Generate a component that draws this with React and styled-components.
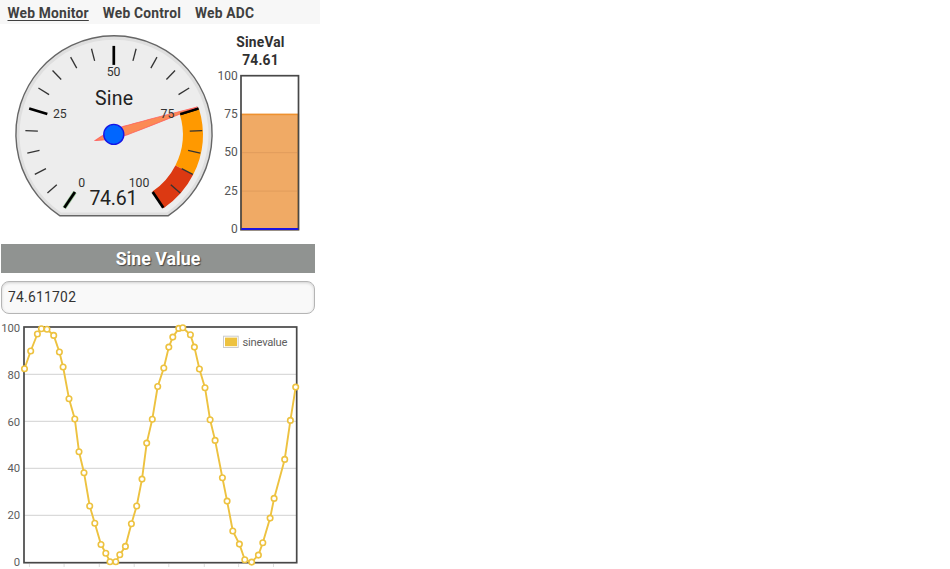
import React from "react";
import styled, { createGlobalStyle } from "styled-components";

const GlobalStyle = createGlobalStyle`
  html, body { margin: 0; background: #fff; overflow: hidden; }
  body { font-family: Roboto, "Open Sans", sans-serif; color: #333; }
`;

const Page = styled.main`
  display: flex;
  flex-direction: column;
  width: 320px;
  height: 569px;
  overflow: hidden;
`;

const Nav = styled.nav`
  display: flex;
  align-items: center;
  gap: 14px;
  box-sizing: border-box;
  height: 24px;
  padding: 1px 0 0 7.5px;
  background: #f7f7f7;
`;

const NavLink = styled.a`
  font-size: 13.8px;
  line-height: 16px;
  font-weight: 700;
  letter-spacing: 0.2px;
  color: #404040;
  white-space: nowrap;
  text-decoration: ${(p) => (p.$active ? "underline" : "none")};
  text-decoration-thickness: 1px;
  text-underline-offset: 1.5px;
  text-decoration-skip-ink: none;
`;

const Meters = styled.section`
  display: grid;
  grid-template-columns: 216px 104px;
  height: 220px;
`;

const Drawing = styled.svg`
  display: block;
  overflow: visible;
  font-family: Roboto, "Open Sans", sans-serif;
`;

const BarPanel = styled.div`
  display: flex;
  flex-direction: column;
`;

const BarTitle = styled.div`
  width: 89px;
  padding-top: 10px;
  height: 36px;
  text-align: center;
  font-size: 13.8px;
  line-height: 17.6px;
  font-weight: 700;
  letter-spacing: 0.2px;
  color: #303030;
`;

const Heading = styled.h1`
  display: flex;
  align-items: center;
  justify-content: center;
  width: 314px;
  height: 29px;
  margin: 0 0 0 1px;
  background: #909391;
  color: #fff;
  font-size: 17.8px;
  font-weight: 700;
  text-shadow: 1px 1px 1px #444;
`;

const ValueField = styled.div`
  display: flex;
  align-items: center;
  box-sizing: border-box;
  width: 314px;
  height: 33px;
  margin: 7.5px 0 4.5px 1px;
  padding: 0 6px;
  border: 1.5px solid #b5b5b5;
  border-radius: 8px;
  background: #f9f9f9;
  box-shadow: inset 0 1px 3px rgba(0, 0, 0, 0.16);
  font-size: 13.8px;
  letter-spacing: 0.28px;
  color: #333;
`;

const CX = 113.8;
const CY = 134.4;

const polar = (value, r) => {
  const a = ((-146 + value * 2.92) * Math.PI) / 180;
  return [CX + r * Math.sin(a), CY - r * Math.cos(a)];
};

const band = (from, to, r1, r2) => {
  const [a, b, c, d] = [polar(from, r2), polar(to, r2), polar(to, r1), polar(from, r1)];
  return `M${a} A${r2} ${r2} 0 0 1 ${b} L${c} A${r1} ${r1} 0 0 0 ${d} Z`;
};

const ticks = Array.from({ length: 21 }, (_, i) => i * 5);

function Gauge({ value }) {
  return (
    <Drawing width="216" height="220" viewBox="0 24 216 220">
      <path d="M60 215.8 A98.1 98.1 0 1 1 168 215.8 Z" fill="#dfdfdf" stroke="#666" strokeWidth="1.4" />
      <path d="M61 212.4 A94.5 94.5 0 1 1 167 212.4 Z" fill="#ededed" />
      <path d={band(75, 90, 69, 89)} fill="#ff9900" />
      <path d={band(90, 100, 69, 89)} fill="#dc3912" />
      {ticks.map((t) => {
        const major = t % 25 === 0;
        const [x1, y1] = polar(t, major ? 69.5 : 76);
        const [x2, y2] = polar(t, 88.5);
        return (
          <g key={t}>
            {t === 0 && <line x1={x1} y1={y1} x2={x2} y2={y2} stroke="#9acb9a" strokeWidth="4" />}
            <line x1={x1} y1={y1} x2={x2} y2={y2} stroke={major ? "#000" : "#333"} strokeWidth={major ? 2.7 : 1.3} />
          </g>
        );
      })}
      <g transform={`translate(${CX} ${CY}) rotate(${-146 + value * 2.92})`}>
        <path
          d="M0 -88 C1.2 -70 3.6 -38 4.6 -12 Q4 8 0 19.5 Q-4 8 -4.6 -12 C-3.6 -38 -1.2 -70 0 -88Z"
          fill="#ff6b25"
          fillOpacity="0.76"
          stroke="#ff5c5c"
          strokeOpacity="0.85"
        />
      </g>
      <g fill="#333" fontSize="12.3" textAnchor="middle">
        <text x="81.8" y="186.9">0</text>
        <text x="59.8" y="117.9">25</text>
        <text x="113.6" y="76.2">50</text>
        <text x="167.5" y="117.9">75</text>
        <text x="139" y="186.9">100</text>
      </g>
      <g fill="#222" fontSize="19.5" textAnchor="middle">
        <text x="114" y="104.5" textLength="38">Sine</text>
        <text x="113.4" y="205" textLength="48">{value}</text>
      </g>
      <line x1={polar(75, 69.5)[0]} y1={polar(75, 69.5)[1]} x2={polar(75, 88.5)[0]} y2={polar(75, 88.5)[1]} stroke="#000" strokeWidth="2.3" />
      <circle cx={CX} cy={CY} r="10" fill="#0066ff" stroke="#1414e6" strokeWidth="1.4" />
    </Drawing>
  );
}

function BarMeter() {
  return (
    <BarPanel>
      <BarTitle>SineVal<br />74.61</BarTitle>
      <Drawing width="104" height="174" viewBox="216 70 104 174">
        <rect x="241.3" y="114.4" width="57" height="115" fill="#f0aa65" stroke="#ee912f" strokeWidth="1.6" />
        <path d="M242 152.7H298M242 191.1H298" stroke="#e19c5c" />
        <rect x="241" y="75.7" width="57.5" height="154" fill="none" stroke="#484848" strokeWidth="1.7" />
        <path d="M241.3 228.9H298.2" stroke="#1a14e0" strokeWidth="2" />
        <g fill="#555" fontSize="12" textAnchor="end">
          {[100, 75, 50, 25, 0].map((n, i) => (
            <text key={n} x="237.8" y={79.8 + i * 38.25}>{n}</text>
          ))}
        </g>
      </Drawing>
    </BarPanel>
  );
}

const points = [
  [24.5, 368.7], [30.7, 351], [37.4, 334], [41.4, 328.7], [47, 329.3], [53.7, 335.4],
  [59.4, 352], [63.1, 367], [69, 398.7], [74.8, 419], [79, 451.7], [84, 472.7],
  [89.7, 506], [94.8, 523.3], [101, 544.5], [105.8, 553.3], [110, 561.7], [115.8, 561.7],
  [119.8, 554.7], [125.4, 546.4], [131.4, 523.8], [136.7, 506], [142, 479.1], [146.7, 443.1],
  [152.3, 419.2], [157.7, 386.5], [163.8, 368], [168.8, 347.1], [172.8, 337.1], [178.8, 328.4],
  [182.8, 327.8], [190.4, 334.8], [194.4, 347.1], [199.4, 369], [205, 387.7], [210.1, 419.8],
  [215.1, 440.4], [222.4, 477.8], [227.1, 501.1], [232.8, 531], [239.4, 544.1], [244.8, 559.8],
  [251.7, 562.1], [258.4, 555.1], [262.8, 542.8], [270.1, 518.1], [274.1, 498.4], [284.7, 459.4],
  [290.4, 420.4], [295.7, 387.1],
];

function LineChart() {
  return (
    <Drawing width="320" height="251" viewBox="0 318 320 251">
      <path d="M24 374.4H297M24 421.4H297M24 468.4H297M24 515.4H297" stroke="#dadada" strokeWidth="1.1" />
      <path d="M29.4 564V567M64.1 564V567M99.3 564V567M134.2 564V567M168.8 564V567M204.3 564V567M238.6 564V567M273.5 564V567" stroke="#ddd" />
      <rect x="24" y="327" width="272.7" height="235.7" fill="none" stroke="#484848" strokeWidth="1.7" />
      <g fill="#5c5c5c" fontSize="11.3" textAnchor="end">
        {[100, 80, 60, 40, 20, 0].map((n, i) => (
          <text key={n} x="20.2" y={331.7 + i * 46.9}>{n}</text>
        ))}
      </g>
      <polyline points={points.join(" ")} fill="none" stroke="#edc240" strokeWidth="1.9" strokeLinejoin="round" />
      {points.map(([x, y]) => (
        <circle key={x} cx={x} cy={y} r="2.75" fill="#fff" stroke="#edc240" strokeWidth="1.6" />
      ))}
      <rect x="223.5" y="336.2" width="14.7" height="11.3" fill="#fff" stroke="#ccc" />
      <rect x="225" y="337.6" width="12" height="8.6" fill="#edc240" />
      <text x="242.5" y="345.8" fill="#606060" fontSize="11.2" textLength="45">sinevalue</text>
    </Drawing>
  );
}

export default function App() {
  return (
    <>
      <GlobalStyle />
      <Page>
        <Nav>
          <NavLink $active>Web Monitor</NavLink>
          <NavLink>Web Control</NavLink>
          <NavLink>Web ADC</NavLink>
        </Nav>
        <Meters>
          <Gauge value={74.61} />
          <BarMeter />
        </Meters>
        <Heading>Sine Value</Heading>
        <ValueField>74.611702</ValueField>
        <LineChart />
      </Page>
    </>
  );
}
